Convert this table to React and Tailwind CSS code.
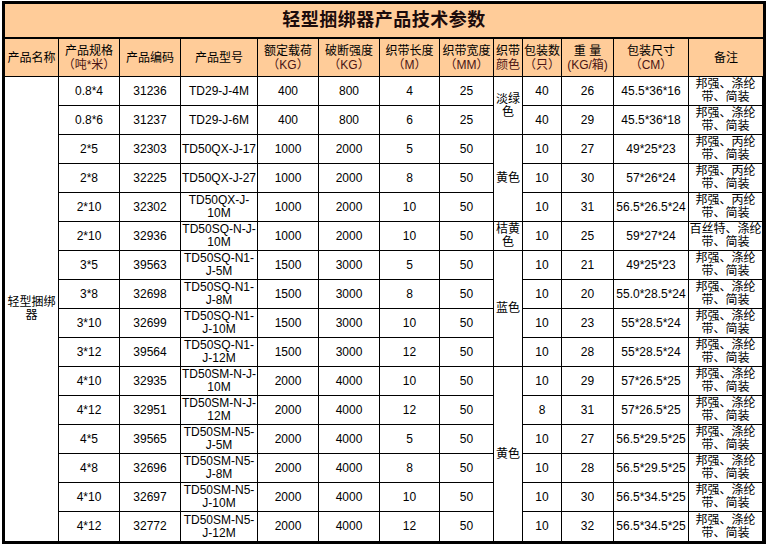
import React from 'react';

const cols = [54, 61, 61, 77, 61, 61, 60, 54, 29, 39, 52, 75, 74];

const headers = [
  ['产品名称'],
  ['产品规格', '（吨*米）'],
  ['产品编码'],
  ['产品型号'],
  ['额定载荷', '（KG）'],
  ['破断强度', '（KG）'],
  ['织带长度', '（M）'],
  ['织带宽度', '（MM）'],
  ['织带', '颜色'],
  ['包装数', '（只）'],
  ['重 量', '(KG/箱)'],
  ['包装尺寸', '（CM）'],
  ['备注'],
];

const yq = '邦强、涤纶|带、简装';
const bq = '邦强、丙纶|带、简装';

const rows = [
  ['0.8*4', '31236', 'TD29-J-4M', '400', '800', '4', '25', '40', '26', '45.5*36*16', yq],
  ['0.8*6', '31237', 'TD29-J-6M', '400', '800', '6', '25', '40', '29', '45.5*36*18', yq],
  ['2*5', '32303', 'TD50QX-J-17', '1000', '2000', '5', '50', '10', '27', '49*25*23', bq],
  ['2*8', '32225', 'TD50QX-J-27', '1000', '2000', '8', '50', '10', '30', '57*26*24', bq],
  ['2*10', '32302', 'TD50QX-J-|10M', '1000', '2000', '10', '50', '10', '31', '56.5*26.5*24', bq],
  ['2*10', '32936', 'TD50SQ-N-J-|10M', '1000', '2000', '10', '50', '10', '25', '59*27*24', '百丝特、涤纶|带、简装'],
  ['3*5', '39563', 'TD50SQ-N1-|J-5M', '1500', '3000', '5', '50', '10', '21', '49*25*23', yq],
  ['3*8', '32698', 'TD50SQ-N1-|J-8M', '1500', '3000', '8', '50', '10', '20', '55.0*28.5*24', yq],
  ['3*10', '32699', 'TD50SQ-N1-|J-10M', '1500', '3000', '10', '50', '10', '23', '55*28.5*24', yq],
  ['3*12', '39564', 'TD50SQ-N1-|J-12M', '1500', '3000', '12', '50', '10', '28', '55*28.5*24', yq],
  ['4*10', '32935', 'TD50SM-N-J-|10M', '2000', '4000', '10', '50', '10', '29', '57*26.5*25', yq],
  ['4*12', '32951', 'TD50SM-N-J-|12M', '2000', '4000', '12', '50', '8', '31', '57*26.5*25', yq],
  ['4*5', '39565', 'TD50SM-N5-|J-5M', '2000', '4000', '5', '50', '10', '27', '56.5*29.5*25', yq],
  ['4*8', '32696', 'TD50SM-N5-|J-8M', '2000', '4000', '8', '50', '10', '28', '56.5*29.5*25', yq],
  ['4*10', '32697', 'TD50SM-N5-|J-10M', '2000', '4000', '10', '50', '10', '30', '56.5*34.5*25', yq],
  ['4*12', '32772', 'TD50SM-N5-|J-12M', '2000', '4000', '12', '50', '10', '32', '56.5*34.5*25', yq],
];

// colour column spans, keyed by starting row
const colours = {
  0: ['淡绿|色', 2],
  2: ['黄色', 3],
  5: ['桔黄|色', 1],
  6: ['蓝色', 4],
  10: ['黄色', 6],
};

const Lines = ({ text }) => {
  const parts = text.split('|');
  return parts.map((p, i) => (
    <React.Fragment key={i}>
      {i > 0 && <br />}
      {p}
    </React.Fragment>
  ));
};

const cell = (last, lastRow) =>
  `p-0 text-center align-middle whitespace-nowrap border-black ${last ? '' : 'border-r'} ${lastRow ? '' : 'border-b'}`;

export default function App() {
  return (
    <div className="bg-white w-[769px] h-[545px] pt-[1px] pl-[2px] text-black text-[12px] leading-[13px] font-['Liberation_Sans','Noto_Sans_CJK_SC',sans-serif]">
      <div className="w-[764px] border-[3px] border-black">
        <div className="h-[35px] flex items-center justify-center bg-[#ffcc99] border-b-2 border-black text-[18px] font-bold text-[#1c0b0b] tracking-[0.5px]">
          轻型捆绑器产品技术参数
        </div>
        <table className="table-fixed border-separate border-spacing-0 w-[758px]">
          <colgroup>
            {cols.map((w, i) => (
              <col key={i} style={{ width: w }} />
            ))}
          </colgroup>
          <thead>
            <tr className="h-[38px] bg-[#ffcc99]">
              {headers.map((h, i) => (
                <th key={i} className={`${cell(i === 12, false)} font-normal leading-[14px]`}>
                  {h[0]}
                  {h[1] && (
                    <>
                      <br />
                      <span className="text-[#4a1414]">{h[1]}</span>
                    </>
                  )}
                </th>
              ))}
            </tr>
          </thead>
          <tbody>
            {rows.map((r, ri) => {
              const lastRow = ri === rows.length - 1;
              const tds = [];
              if (ri === 0) {
                tds.push(
                  <td key="name" rowSpan={rows.length} className={cell(false, true)}>
                    轻型捆绑
                    <br />器
                  </td>
                );
              }
              r.forEach((v, ci) => {
                const col = ci + 1;
                if (col === 8 && colours[ri]) {
                  const [txt, span] = colours[ri];
                  tds.push(
                    <td key="colour" rowSpan={span} className={cell(false, ri + span === rows.length)}>
                      <Lines text={txt} />
                    </td>
                  );
                }
                tds.push(
                  <td key={ci} className={cell(col === 12, lastRow)}>
                    <Lines text={v} />
                  </td>
                );
              });
              return (
                <tr key={ri} className="h-[29px]">
                  {tds}
                </tr>
              );
            })}
          </tbody>
        </table>
      </div>
    </div>
  );
}
